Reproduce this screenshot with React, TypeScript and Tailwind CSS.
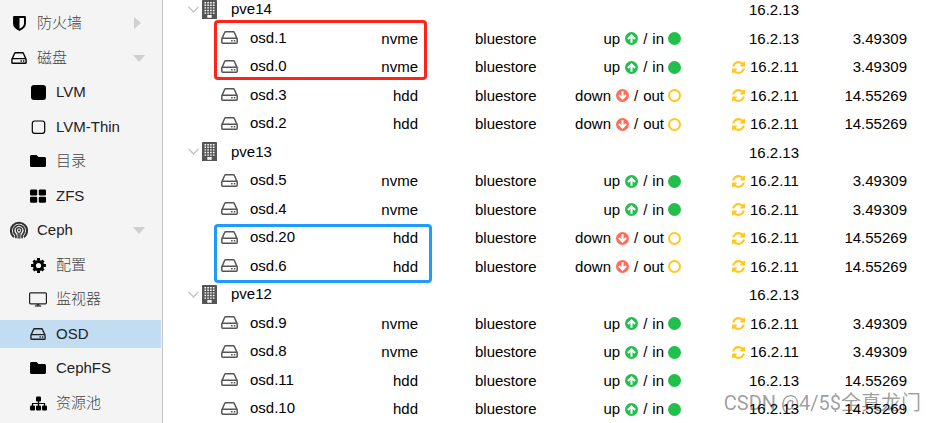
import React from 'react';
import { FaFolder } from 'react-icons/fa';

interface IconProps {
  className?: string;
}

const DiskIcon: React.FC<IconProps> = ({ className }) => (
  <svg viewBox="0 0 17 13" className={className} fill="none" stroke="currentColor" strokeWidth="1.5">
    <path d="M1 7.6 3.5 1.8Q3.9.8 4.8.8H12.2Q13.1.8 13.5 1.8L16 7.6" />
    <rect x="0.8" y="7.2" width="15.4" height="5" rx="0.9" />
    <path d="M10.1 9.7h1.5M12.8 9.7h1.5" />
  </svg>
);

const ShieldIcon: React.FC<IconProps> = ({ className }) => (
  <svg viewBox="0 0 12 14" className={className} fill="none" stroke="currentColor" strokeWidth="1.8">
    <path d="M.9.9H11.1V7Q11.1 10.6 6 13 .9 10.6.9 7Z" strokeLinejoin="round" />
    <path d="M1 1H6V13Q1 10.4 1 7Z" fill="currentColor" stroke="none" />
  </svg>
);

const SquareFilledIcon: React.FC<IconProps> = ({ className }) => (
  <svg viewBox="0 0 15 15" className={className} fill="currentColor">
    <rect width="15" height="15" rx="3" />
  </svg>
);

const SquareIcon: React.FC<IconProps> = ({ className }) => (
  <svg viewBox="0 0 15 15" className={className} fill="none" stroke="currentColor" strokeWidth="1.2">
    <rect x="1.3" y="1" width="12.4" height="12.4" rx="2.4" />
  </svg>
);

const GridIcon: React.FC<IconProps> = ({ className }) => (
  <svg viewBox="0 0 16 14" className={className} fill="currentColor">
    <rect x="0" y="0.4" width="7.2" height="6" rx="1.2" />
    <rect x="8.8" y="0.4" width="7.2" height="6" rx="1.2" />
    <rect x="0" y="7.8" width="7.2" height="6" rx="1.2" />
    <rect x="8.8" y="7.8" width="7.2" height="6" rx="1.2" />
  </svg>
);

const CogIcon: React.FC<IconProps> = ({ className }) => (
  <svg viewBox="-7.5 -7.5 15 15" className={className} fill="none" stroke="currentColor">
    <circle r="4.1" strokeWidth="3" />
    <path d="M0-7.4V-5M0 7.4V5M-7.4 0H-5M7.4 0H5M-5-5-3.6-3.6M5 5 3.6 3.6M5-5 3.6-3.6M-5 5-3.6 3.6" strokeWidth="3" />
  </svg>
);

const CephIcon: React.FC<IconProps> = ({ className }) => (
  <svg viewBox="0 0 17 17" className={className} fill="none" stroke="currentColor">
    <path d="M3.8 15.2A7.6 7.6 0 1 1 13.2 15.2" strokeWidth="2" />
    <path d="M5.6 16.4V14.2Q5.6 13.1 4.6 12.2A5 5 0 1 1 12.4 12.2Q11.4 13.1 11.4 14.2V16.4" strokeWidth="1.6" />
    <path d="M7.7 16.5V11.7Q6 10.8 6 8.8A2.5 2.5 0 0 1 11 8.8Q11 10.8 9.3 11.7V16.5" strokeWidth="1.2" />
    <circle cx="8.5" cy="8.8" r="1" fill="currentColor" stroke="none" />
  </svg>
);

const MonitorIcon: React.FC<IconProps> = ({ className }) => (
  <svg viewBox="0 0 18 15" className={className} fill="none" stroke="currentColor" strokeWidth="1.2">
    <rect x="0.6" y="0.8" width="16.8" height="11" rx="1" />
    <path d="M9 12v1.6" strokeWidth="2.6" />
    <path d="M5.8 14h6.4" />
  </svg>
);

const SitemapIcon: React.FC<IconProps> = ({ className }) => (
  <svg viewBox="0 0 17 15" className={className} fill="currentColor">
    <rect x="6" y="0.5" width="5" height="5" rx="1" />
    <rect x="0" y="9.5" width="5" height="5" rx="1" />
    <rect x="6" y="9.5" width="5" height="5" rx="1" />
    <rect x="12" y="9.5" width="5" height="5" rx="1" />
    <path d="M2.5 10V7.5H14.5V10M8.5 5v5" fill="none" stroke="currentColor" strokeWidth="1.2" />
  </svg>
);

const BuildingIcon: React.FC<IconProps> = ({ className }) => (
  <svg viewBox="0 0 15 19" className={className}>
    <path d="M0 .8Q0 0 .8 0H14.2Q15 0 15 .8V19H0Z" fill="currentColor" />
    <path
      d="M2.5 2.7h10M2.5 5.3h10M2.5 7.9h10M2.5 10.5h10M2.5 13.1h10"
      stroke="#fff"
      strokeWidth="1.4"
      strokeDasharray="1.6 1.2"
    />
    <rect x="5.3" y="15" width="4.4" height="2.8" rx="0.5" fill="#fff" />
  </svg>
);

const ArrowCircleIcon: React.FC<IconProps> = ({ className }) => (
  <svg viewBox="0 0 13 13" className={className}>
    <circle cx="6.5" cy="6.5" r="6.5" fill="currentColor" />
    <path d="M6.5 10.8V3.6M2.9 7 6.5 3.4 10.1 7" fill="none" stroke="#fff" strokeWidth="2.1" />
  </svg>
);

const CircleIcon: React.FC<IconProps & { filled: boolean }> = ({ className, filled }) => (
  <svg viewBox="0 0 13 13" className={className}>
    {filled
      ? <circle cx="6.5" cy="6.5" r="6.5" fill="currentColor" />
      : <circle cx="6.5" cy="6.5" r="5.5" fill="none" stroke="currentColor" strokeWidth="2" />}
  </svg>
);

const RefreshIcon: React.FC<IconProps> = ({ className }) => (
  <svg viewBox="0 128 1536 1536" className={className} fill="currentColor">
    <path d="M1511 1056q0 5-1 7-64 268-268 434.5t-478 166.5q-146 0-282.5-55t-243.5-157l-129 129q-19 19-45 19t-45-19-19-45v-448q0-26 19-45t45-19h448q26 0 45 19t19 45-19 45l-137 137q71 66 161 102t187 36q134 0 250-65t186-179q11-17 53-117 8-23 30-23h192q13 0 22.5 9.5t9.5 22.5zm25-800v448q0 26-19 45t-45 19h-448q-26 0-45-19t-19-45 19-45l138-138q-148-137-349-137-134 0-250 65t-186 179q-11 17-53 117-8 23-30 23h-199q-13 0-22.5-9.5t-9.5-22.5v-7q65-268 270-434.5t480-166.5q146 0 284 55.5t245 156.5l130-129q19-19 45-19t45 19 19 45z" />
  </svg>
);

const ChevronIcon: React.FC<IconProps> = ({ className }) => (
  <svg viewBox="0 0 11 7" className={className} fill="none" stroke="currentColor" strokeWidth="1.4">
    <path d="M.5.8 5.5 6 10.5.8" />
  </svg>
);

interface MenuItem {
  label: string;
  icon: React.ReactNode;
  child?: boolean;
  arrow?: 'right' | 'down';
  active?: boolean;
  cjk?: boolean;
}

const menu: MenuItem[] = [
  { label: '防火墙', icon: <ShieldIcon className="h-[15px] w-[13px]" />, arrow: 'right', cjk: true },
  { label: '磁盘', icon: <DiskIcon className="h-3 w-4" />, arrow: 'down', cjk: true },
  { label: 'LVM', icon: <SquareFilledIcon className="h-[15px] w-[15px]" />, child: true },
  { label: 'LVM-Thin', icon: <SquareIcon className="h-[15px] w-[15px]" />, child: true },
  { label: '目录', icon: <FaFolder className="h-4 w-4" />, child: true, cjk: true },
  { label: 'ZFS', icon: <GridIcon className="h-3.5 w-4" />, child: true },
  { label: 'Ceph', icon: <CephIcon className="h-[18px] w-[18px] text-[#333]" />, arrow: 'down' },
  { label: '配置', icon: <CogIcon className="h-[15px] w-[15px]" />, child: true, cjk: true },
  { label: '监视器', icon: <MonitorIcon className="h-[15px] w-[18px] text-[#222]" />, child: true, cjk: true },
  { label: 'OSD', icon: <DiskIcon className="h-3 w-4 text-[#222]" />, child: true, active: true },
  { label: 'CephFS', icon: <FaFolder className="h-4 w-4" />, child: true },
  { label: '资源池', icon: <SitemapIcon className="h-[15px] w-[17px]" />, child: true, cjk: true },
];

interface Osd {
  name: string;
  type: 'nvme' | 'hdd';
  up: boolean;
  version: string;
  outdated: boolean;
  size: string;
}

interface Host {
  name: string;
  version: string;
  osds: Osd[];
}

const hosts: Host[] = [
  {
    name: 'pve14',
    version: '16.2.13',
    osds: [
      { name: 'osd.1', type: 'nvme', up: true, version: '16.2.13', outdated: false, size: '3.49309' },
      { name: 'osd.0', type: 'nvme', up: true, version: '16.2.11', outdated: true, size: '3.49309' },
      { name: 'osd.3', type: 'hdd', up: false, version: '16.2.11', outdated: true, size: '14.55269' },
      { name: 'osd.2', type: 'hdd', up: false, version: '16.2.11', outdated: true, size: '14.55269' },
    ],
  },
  {
    name: 'pve13',
    version: '16.2.13',
    osds: [
      { name: 'osd.5', type: 'nvme', up: true, version: '16.2.11', outdated: true, size: '3.49309' },
      { name: 'osd.4', type: 'nvme', up: true, version: '16.2.11', outdated: true, size: '3.49309' },
      { name: 'osd.20', type: 'hdd', up: false, version: '16.2.11', outdated: true, size: '14.55269' },
      { name: 'osd.6', type: 'hdd', up: false, version: '16.2.11', outdated: true, size: '14.55269' },
    ],
  },
  {
    name: 'pve12',
    version: '16.2.13',
    osds: [
      { name: 'osd.9', type: 'nvme', up: true, version: '16.2.11', outdated: true, size: '3.49309' },
      { name: 'osd.8', type: 'nvme', up: true, version: '16.2.11', outdated: true, size: '3.49309' },
      { name: 'osd.11', type: 'hdd', up: true, version: '16.2.13', outdated: false, size: '14.55269' },
      { name: 'osd.10', type: 'hdd', up: true, version: '16.2.13', outdated: false, size: '14.55269' },
    ],
  },
];

const Sidebar: React.FC = () => (
  <nav className="w-[163px] shrink-0 border-r border-[#c4c4c4] bg-[#f4f4f4] pt-[9px] pr-px">
    <ul>
      {menu.map(item => (
        <li key={item.label} className="odd:mb-[7px] even:mb-[6px]">
          <a
            href="#"
            className={`flex h-7 items-center gap-2 pr-4 ${item.child ? 'pl-7' : 'pl-[9px]'} ${item.active ? 'bg-[#c2ddf2]' : ''}`}
          >
            <span className="flex w-5 shrink-0 justify-center text-black">{item.icon}</span>
            <span className={`flex-1 whitespace-nowrap ${item.cjk ? 'font-light text-[#444]' : 'text-[#222]'}`}>{item.label}</span>
            {item.arrow === 'right' && (
              <svg viewBox="0 0 7 12" className="mr-1 h-3 w-[7px]"><path d="M0 0 7 6 0 12Z" fill="#cfcfcf" /></svg>
            )}
            {item.arrow === 'down' && (
              <svg viewBox="0 0 12 7" className="h-[7px] w-3"><path d="M0 0H12L6 7Z" fill="#cfcfcf" /></svg>
            )}
          </a>
        </li>
      ))}
    </ul>
  </nav>
);

const HostRow: React.FC<{ host: Host }> = ({ host }) => (
  <tr className="odd:h-7 even:h-[29px]">
    <td className="pb-0.5 pl-[25px]">
      <div className="flex items-center">
        <button type="button" aria-label={host.name} className="text-[#c4c4c4]">
          <ChevronIcon className="h-[7px] w-[11px]" />
        </button>
        <BuildingIcon className="ml-[3px] h-[19px] w-[15px] text-[#555]" />
        <span className="ml-3.5">{host.name}</span>
      </div>
    </td>
    <td />
    <td />
    <td />
    <td className="pl-[58px]">{host.version}</td>
    <td />
  </tr>
);

const OsdRow: React.FC<{ osd: Osd }> = ({ osd }) => (
  <tr className="odd:h-7 even:h-[29px]">
    <td className="pb-0.5 pl-[58px]">
      <div className="flex items-center gap-3">
        <DiskIcon className="h-[13px] w-[17px] text-[#555]" />
        <span>{osd.name}</span>
      </div>
    </td>
    <td className="pr-[11px] text-right">{osd.type}</td>
    <td className="pl-[46px]">bluestore</td>
    <td className="pr-[10px]">
      <div className="flex items-center justify-end gap-1">
        <div className="flex items-center gap-[5px]">
          <span>{osd.up ? 'up' : 'down'}</span>
          <ArrowCircleIcon className={osd.up ? 'h-[13px] w-[13px] text-[#21bf4b]' : 'h-[13px] w-[13px] rotate-180 text-[#ff6c59]'} />
          <span>/</span>
          <span>{osd.up ? 'in' : 'out'}</span>
        </div>
        <CircleIcon filled={osd.up} className={osd.up ? 'h-[13px] w-[13px] text-[#21bf4b]' : 'h-[13px] w-[13px] text-[#ffc81a]'} />
      </div>
    </td>
    <td className={osd.outdated ? 'pl-[41px]' : 'pl-[58px]'}>
      <div className="flex items-center gap-[5px]">
        {osd.outdated && <RefreshIcon className="h-[13px] w-[13px] text-[#ffc81a]" />}
        <span>{osd.version}</span>
      </div>
    </td>
    <td className="pr-[10px] text-right">{osd.size}</td>
  </tr>
);

export default function App() {
  return (
    <div className="relative flex min-h-screen overflow-hidden bg-white font-['Liberation_Sans','Noto_Sans_CJK_SC',sans-serif] text-[15px] leading-5 text-black">
      <Sidebar />
      <main className="relative min-w-0 flex-1 pr-[17px]">
        <table className="-mt-1 w-full table-fixed border-collapse">
          <colgroup>
            <col />
            <col className="w-20" />
            <col className="w-[120px]" />
            <col className="w-[142px]" />
            <col className="w-[120px]" />
            <col className="w-[106px]" />
          </colgroup>
          <tbody>
            {hosts.map(host => (
              <React.Fragment key={host.name}>
                <HostRow host={host} />
                {host.osds.map(osd => <OsdRow key={osd.name} osd={osd} />)}
              </React.Fragment>
            ))}
          </tbody>
        </table>

        {/* Highlight boxes */}
        <div className="pointer-events-none absolute top-[20px] left-[51px] h-[60px] w-[213px] rounded-[4px] border-3 border-[#ff2419]" />
        <div className="pointer-events-none absolute top-[224px] left-[51px] h-[59px] w-[218px] rounded-[4px] border-3 border-[#1e9bff]" />
      </main>

      {/* Watermark */}
      <div className="pointer-events-none absolute right-[13px] bottom-[6px] font-[Roboto,'Noto_Sans_CJK_SC',sans-serif] text-[20px] leading-7 whitespace-nowrap text-black/40">
        CSDN @4/5$全真龙门
      </div>
    </div>
  );
}
